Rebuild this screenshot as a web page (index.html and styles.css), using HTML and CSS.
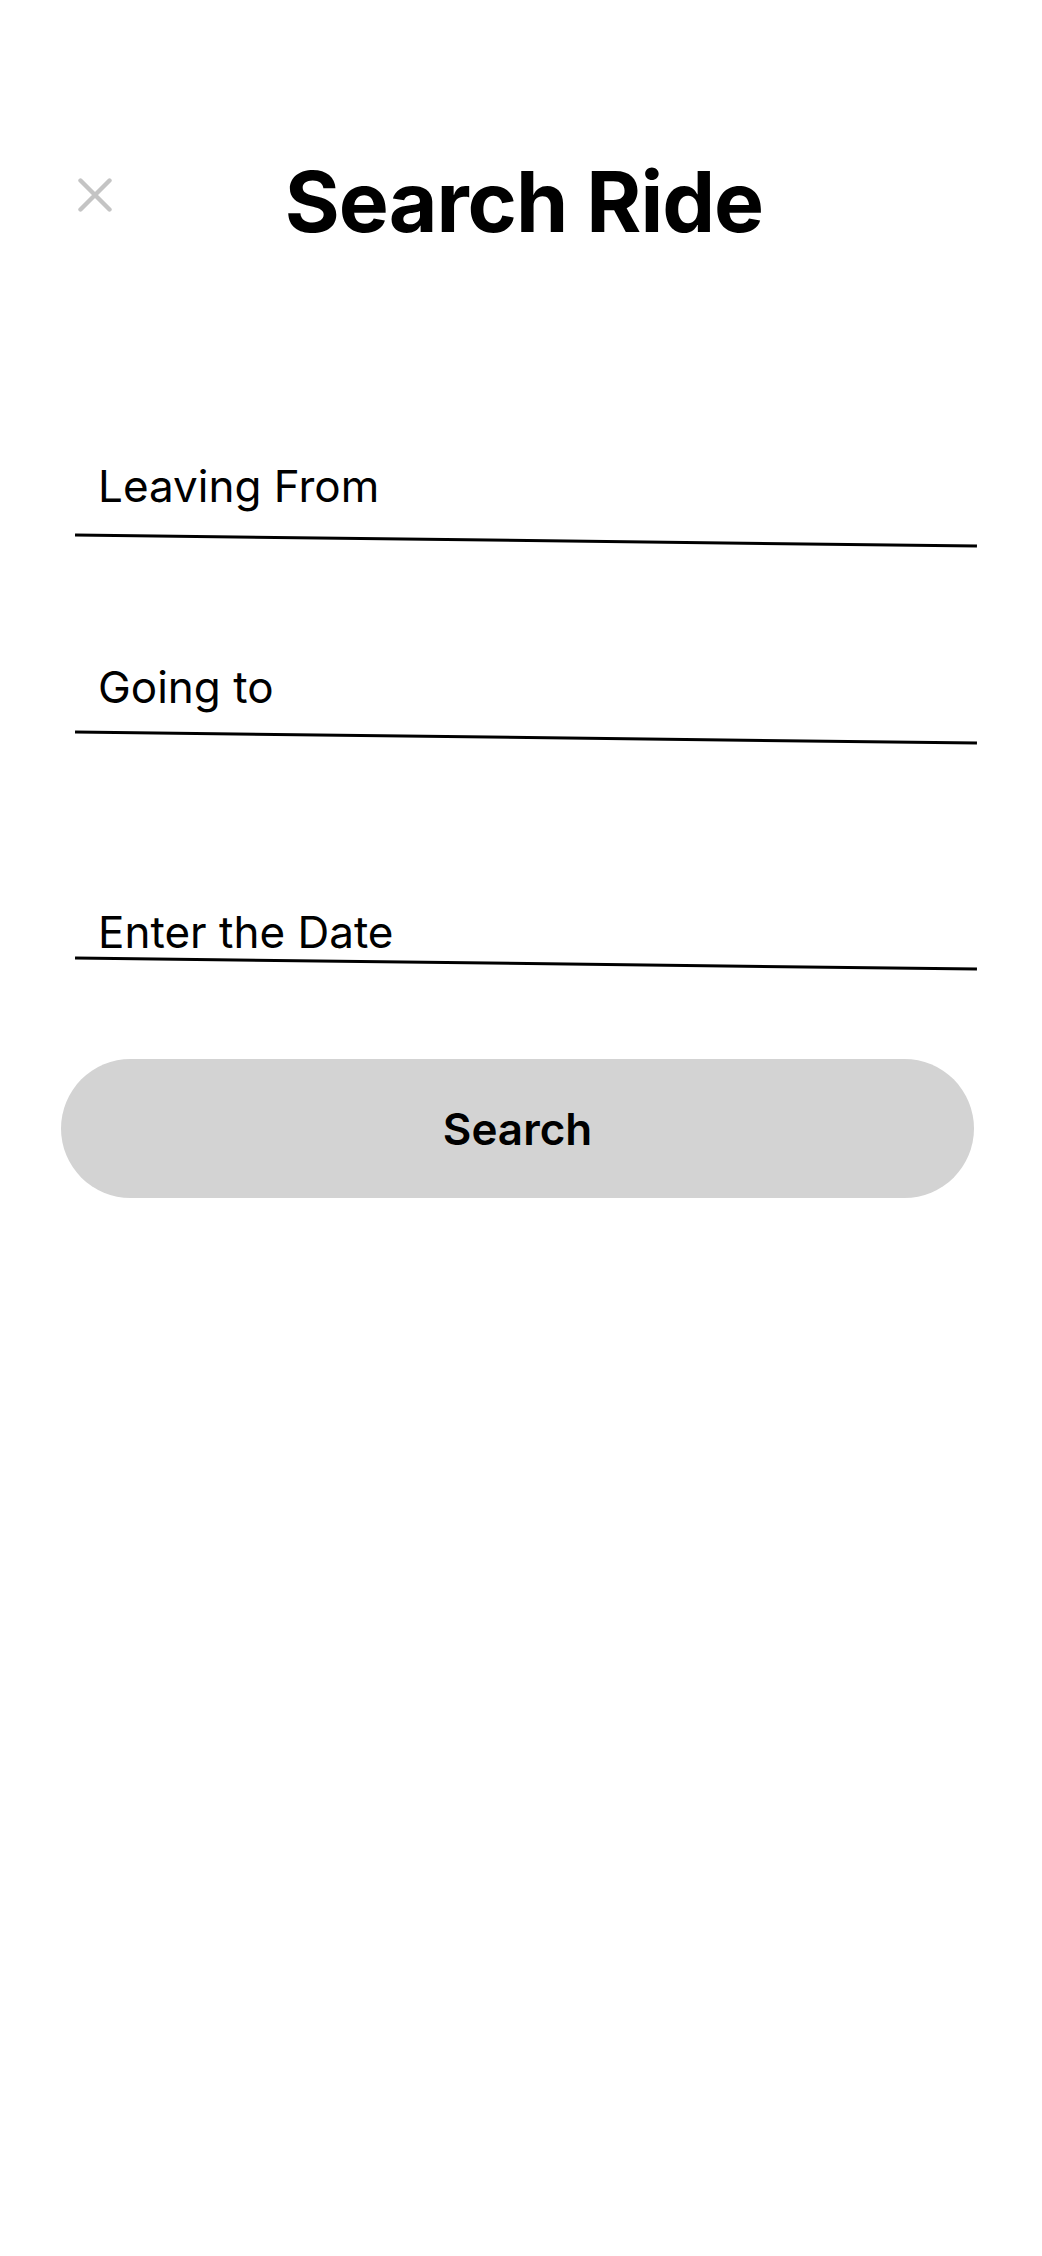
FILE: index.html
```html
<!DOCTYPE html>
<html lang="en">
<head>
<meta charset="utf-8">
<title>Search Ride</title>
<link rel="stylesheet" href="styles.css">
</head>
<body>
<div class="screen">
  <header class="header">
    <div class="close-col">
      <svg class="close" width="34" height="34" viewBox="0 0 34 34" aria-label="Close">
        <path d="M2.5 2.5 L31.5 31.5 M31.5 2.5 L2.5 31.5" stroke="#c4c4c4" stroke-width="4.4" stroke-linecap="round" fill="none"/>
      </svg>
    </div>
    <h1 class="title">Search Ride</h1>
    <div class="spacer"></div>
  </header>

  <form class="form">
    <div class="field field-from">
      <div class="label">Leaving From</div>
      <div class="line"></div>
    </div>
    <div class="field field-to">
      <div class="label">Going to</div>
      <div class="line"></div>
    </div>
    <div class="field field-date">
      <div class="label">Enter the Date</div>
      <div class="line"></div>
    </div>
    <div class="btn">Search</div>
  </form>
</div>
</body>
</html>
```
FILE: styles.css
```css
* { box-sizing: border-box; }
html, body {
  margin: 0;
  padding: 0;
  background: #ffffff;
}
body {
  font-family: Inter, "Noto Sans", "Liberation Sans", sans-serif;
  color: #000;
  width: 1042px;
  height: 2256px;
}
.screen {
  display: flex;
  flex-direction: column;
}
.header {
  display: grid;
  grid-template-columns: 1fr auto 1fr;
  padding-top: 160px;
}
.close-col {
  padding-left: 78px;
  padding-top: 18px;
}
.close {
  display: block;
}
.title {
  margin: 0;
  font-size: 84px;
  line-height: 1;
  font-weight: 700;
  letter-spacing: -1px;
  text-align: center;
  transform: translateX(3px);
}
.form {
  display: flex;
  flex-direction: column;
  padding-top: 220px;
}
.field {
  display: flex;
  flex-direction: column;
  padding-left: 75px;
}
.label {
  font-size: 44px;
  line-height: 1;
  font-weight: 400;
  padding-left: 23px;
  height: 45px;
}
.line {
  width: 902px;
  height: 2.6px;
  background: #000;
  transform: rotate(0.7deg);
  margin-top: 30px;
}
.field-to { margin-top: 123px; }
.field-to .line { margin-top: 26px; }
.field-date { margin-top: 172px; }
.field-date .line { margin-top: 7px; }
.btn {
  margin-top: 94px;
  margin-left: 61px;
  width: 913px;
  height: 139px;
  border-radius: 70px;
  background: #d3d3d3;
  display: flex;
  align-items: center;
  justify-content: center;
  font-size: 44px;
  font-weight: 600;
  padding-top: 2px;
}
```
